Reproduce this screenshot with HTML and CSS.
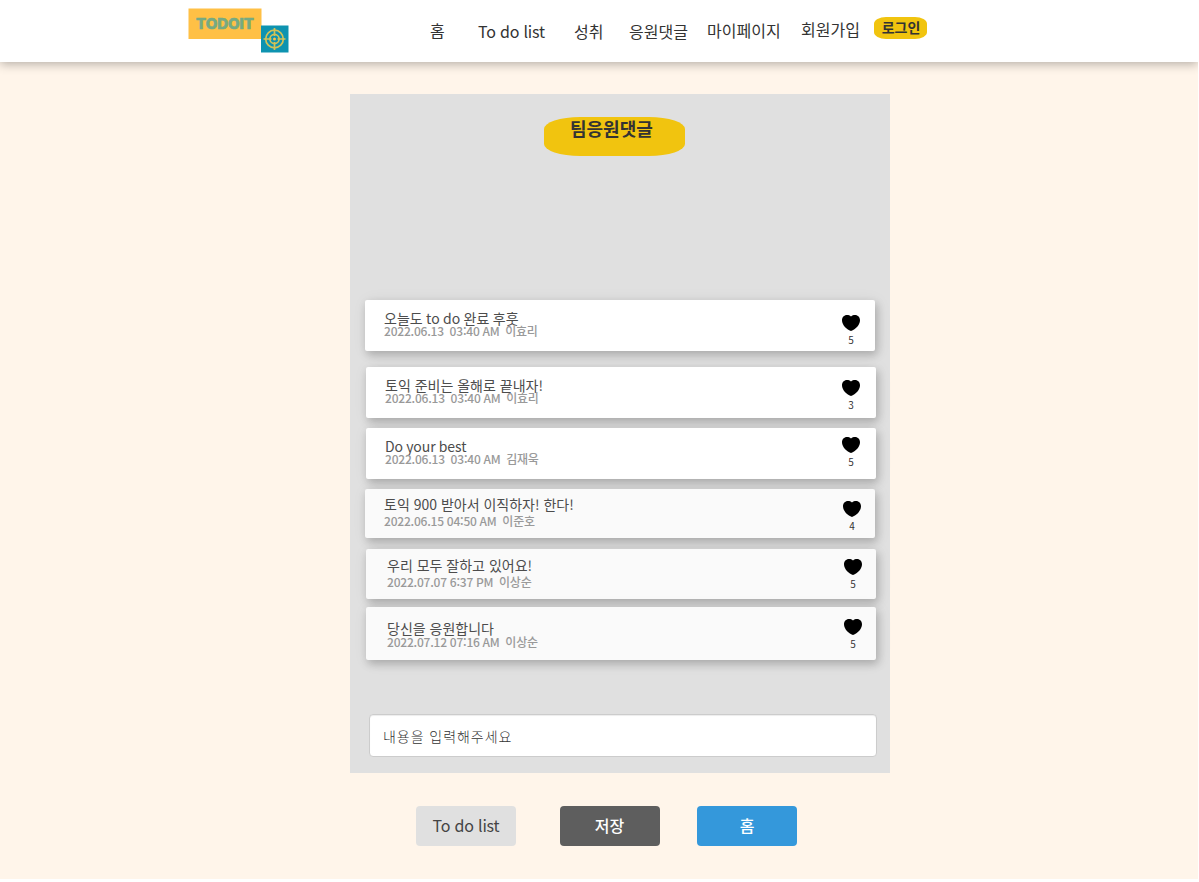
FILE: index.html
```html
<!DOCTYPE html>
<html lang="ko">
<head>
<meta charset="utf-8">
<title>TODOIT</title>
<link rel="stylesheet" href="styles.css">
</head>
<body>
<svg width="0" height="0" class="defs"><symbol id="heart" viewBox="0 0 18 16"><path d="M9 1.600C7.800 .4 6.400 0 5 0 2 0 0 2.300 0 5.200c0 4.500 4.200 9.200 9 10.800 4.800-1.600 9-6.300 9-10.800C18 2.300 16 0 13 0c-1.400 0-2.800.4-4 1.600z"/></symbol></svg>
<div class="page">
  <header class="header">
    <svg class="logo" width="102" height="46" viewBox="0 0 102 46">
      <rect x=".5" y=".5" width="73" height="30.500" fill="#ffc045"/>
      <rect x="73" y="17.500" width="27.500" height="27" fill="#0e93b0"/>
      <text x="8" y="21" textLength="58" lengthAdjust="spacingAndGlyphs" class="logo-text">TODOIT</text>
      <g fill="none" stroke="#d3c257" stroke-width="1.700">
        <circle cx="86.500" cy="31" r="8.800"/>
        <circle cx="86.500" cy="31" r="4.600"/>
        <path d="M86.500 20v8M86.500 34v8M75.500 31h8M89.500 31h8"/>
      </g>
      <circle cx="86.500" cy="31" r="1.500" fill="#ffc045"/>
    </svg>
    <nav class="nav">
      <a class="nav-home">홈</a>
      <a class="nav-todo">To do list</a>
      <a class="nav-achieve">성취</a>
      <a class="nav-cheer">응원댓글</a>
      <a class="nav-my">마이페이지</a>
      <a class="nav-join">회원가입</a>
      <a class="login">로그인</a>
    </nav>
  </header>
  <main class="board">
    <h1 class="title">팀응원댓글</h1>
    <section class="comments">
      <article class="card card-a">
        <div class="body"><p class="text">오늘도 to do 완료 후훗</p><p class="meta">2022.06.13&nbsp; 03:40 AM&nbsp; 이효리</p></div>
        <div class="like"><svg class="heart"><use href="#heart"/></svg><span>5</span></div>
      </article>
      <article class="card card-b">
        <div class="body"><p class="text">토익 준비는 올해로 끝내자!</p><p class="meta">2022.06.13&nbsp; 03:40 AM&nbsp; 이효리</p></div>
        <div class="like"><svg class="heart"><use href="#heart"/></svg><span>3</span></div>
      </article>
      <article class="card card-c">
        <div class="body"><p class="text">Do your best</p><p class="meta">2022.06.13&nbsp; 03:40 AM&nbsp; 김재욱</p></div>
        <div class="like"><svg class="heart"><use href="#heart"/></svg><span>5</span></div>
      </article>
      <article class="card card-d">
        <div class="body"><p class="text">토익 900 받아서 이직하자! 한다!</p><p class="meta">2022.06.15 04:50 AM&nbsp; 이준호</p></div>
        <div class="like"><svg class="heart"><use href="#heart"/></svg><span>4</span></div>
      </article>
      <article class="card card-e">
        <div class="body"><p class="text">우리 모두 잘하고 있어요!</p><p class="meta">2022.07.07 6:37 PM&nbsp; 이상순</p></div>
        <div class="like"><svg class="heart"><use href="#heart"/></svg><span>5</span></div>
      </article>
      <article class="card card-f">
        <div class="body"><p class="text">당신을 응원합니다</p><p class="meta">2022.07.12 07:16 AM&nbsp; 이상순</p></div>
        <div class="like"><svg class="heart"><use href="#heart"/></svg><span>5</span></div>
      </article>
    </section>
    <input class="entry" type="text" placeholder="내용을 입력해주세요">
  </main>
  <div class="actions">
    <button class="btn btn-list">To do list</button>
    <button class="btn btn-save">저장</button>
    <button class="btn btn-home">홈</button>
  </div>
</div>
</body>
</html>
```
FILE: styles.css
```css
* { box-sizing: border-box; }
body {
  margin: 0;
  background: #fff;
  font-family: "Noto Sans CJK KR", sans-serif;
  font-size: 16px;
  color: #333;
}
h1, p { margin: 0; }
.defs { display: block; }
.page { width: 1198px; height: 879px; background: #fff5ea; overflow: hidden; }

.header {
  display: flex;
  align-items: flex-start;
  height: 62px;
  padding: 8px 0 0 188px;
  background: #fff;
  box-shadow: 0 2px 10px rgba(0, 0, 0, .3);
}
.logo { flex: none; margin-right: 140px; }
.logo-text { font: 800 14px Inter, sans-serif; fill: #75aa83; stroke: #75aa83; stroke-width: .6; }
.nav { display: flex; align-items: flex-start; line-height: 24px; white-space: nowrap; }
.nav-home { width: 48px; padding-top: 10px; }
.nav-todo { width: 96px; padding-top: 11px; letter-spacing: -.2px; }
.nav-achieve { width: 55px; padding-top: 11px; }
.nav-cheer { width: 78px; padding-top: 11px; }
.nav-my { width: 94px; padding-top: 10px; }
.nav-join { width: 73px; padding-top: 9px; }
.login {
  width: 53px;
  height: 22px;
  margin-top: 9px;
  padding-left: 1px;
  border-radius: 12px / 7px;
  background: #f1c40f;
  font-size: 14px;
  font-weight: 700;
  line-height: 20px;
  text-align: center;
}

.board {
  width: 540px;
  height: 679px;
  margin: 32px 0 0 350px;
  padding-top: 23px;
  background: #e0e0e0;
}
.title {
  width: 141px;
  height: 39px;
  margin-left: 194px;
  padding-left: 26px;
  border-radius: 36px / 12px;
  background: #f1c40f;
  font-size: 18px;
  line-height: 22px;
}
.comments { padding: 144px 0 0 15px; }
.card {
  display: flex;
  justify-content: space-between;
  width: 510px;
  border-radius: 2px;
  background: #fff;
  box-shadow: 2px 4px 8px rgba(0, 0, 0, .2), 2px 2px 16px rgba(0, 0, 0, .08);
}
.body { padding: 10px 0 0 19px; }
.text { color: #4c4c4c; font-size: 14px; line-height: 16px; }
.card-a .text, .card-c .text { word-spacing: -.5px; }
.card-c .text { letter-spacing: -.1px; }
.meta { margin-top: -1px; color: #999; font-size: 12px; font-weight: 500; line-height: 12px; word-spacing: -.3px; letter-spacing: -.2px; }
.like {
  display: flex;
  flex-direction: column;
  align-items: center;
  width: 18px;
  margin-right: 15px;
  font-size: 10px;
  line-height: 12px;
}
.heart { width: 18px; height: 16px; margin-bottom: 3px; flex: none; }
.card-a { height: 51px; }
.card-a .like { padding-top: 15px; }
.card-b { height: 51px; margin: 16px 0 0 1px; }
.card-b .like { padding-top: 13px; margin-right: 16px; }
.card-c { height: 51px; margin: 10px 0 0 1px; }
.card-c .like { padding-top: 9px; margin-right: 16px; }
.card-d { height: 49px; margin-top: 10px; }
.card-d .body { padding-top: 7px; }
.card-d .meta { margin-top: 3px; }
.card-d .like { padding-top: 12px; margin-right: 14px; }
.card-e { height: 50px; margin: 11px 0 0 1px; }
.card-e .body { padding: 8px 0 0 21px; }
.card-e .meta { margin-top: 3px; }
.card-e .like { padding-top: 10px; margin-right: 14px; }
.card-f { height: 53px; margin: 8px 0 0 1px; }
.card-f .body { padding: 13px 0 0 21px; }
.card-f .meta { margin-top: 0; }
.card-f .like { padding-top: 12px; margin-right: 14px; }
.card-d, .card-e, .card-f { background: #fafafa; }

.entry {
  display: block;
  width: 508px;
  height: 43px;
  margin: 54px 0 0 19px;
  padding: 0 13px;
  border: 1px solid #ccc;
  border-radius: 4px;
  background: #fff;
  box-shadow: inset 0 1px 1px rgba(0, 0, 0, .075);
  font: 300 14px "Noto Sans CJK KR", sans-serif;
  letter-spacing: .95px;
}
.entry::placeholder { color: #333; opacity: 1; }

.actions { display: flex; padding: 33px 0 0 416px; }
.btn {
  width: 100px;
  height: 40px;
  padding: 0 0 2px;
  border: 0;
  border-radius: 4px;
  font: 400 16px "Noto Sans CJK KR", sans-serif;
  color: #fff;
}
.btn-list { background: #e0e0e0; color: #444; letter-spacing: -.2px; }
.btn-save { margin: 0 37px 0 44px; padding-right: 1px; background: #5e5e5e; font-weight: 500; }
.btn-home { background: #3498db; font-weight: 500; }
```
